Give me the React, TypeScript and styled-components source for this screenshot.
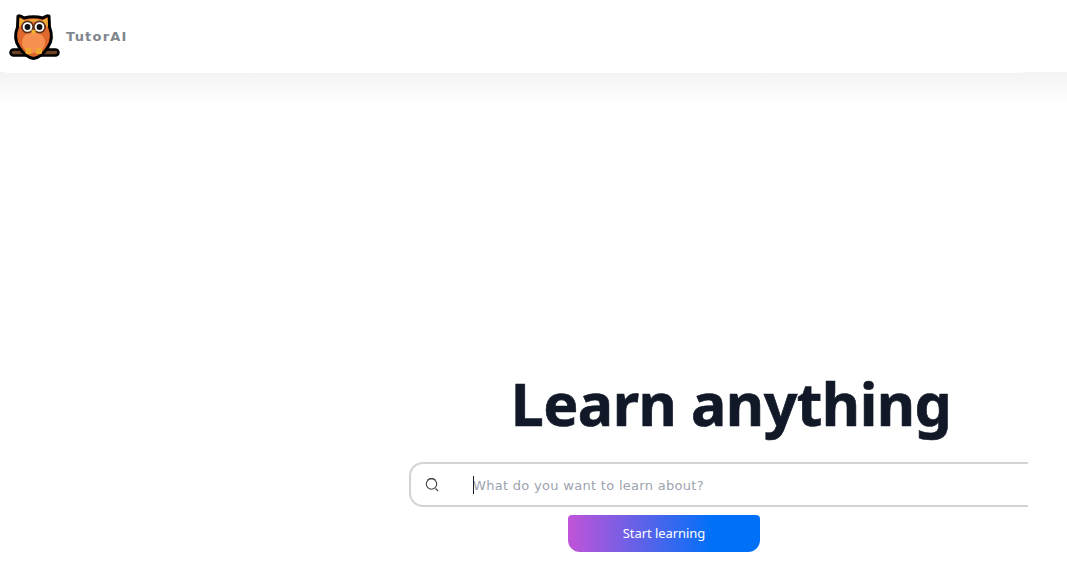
import * as React from 'react';
import styled, { createGlobalStyle } from 'styled-components';

const GlobalStyle = createGlobalStyle`
	html, body {
		margin: 0;
		padding: 0;
		background: #ffffff;
		height: 100%;
		overflow: hidden;
	}
`;

const Owl = () => (
	<svg width="52" height="48" viewBox="0 0 52 48" aria-hidden="true">
		<rect x="1.5" y="36.5" width="48" height="6" rx="3" fill="#6b4226" stroke="#000" strokeWidth="2.5" />
		<path
			d="M9 3 Q11 2 15 5 Q24.5 2.5 34 5 Q38 2 40 3 L40.5 14 Q45 25 39 34 Q33 44 24.5 45.5 Q16 44 10 34 Q4 25 8.5 14 Z"
			fill="#e0682c"
			stroke="#000"
			strokeWidth="3"
			strokeLinejoin="round"
		/>
		<path d="M10.5 5 L16 7.5 Q24.5 5 33 7.5 L38.5 5 L39 14 Q24.5 3 10 14 Z" fill="#eeaa38" />
		<ellipse cx="24.5" cy="29.5" rx="11.5" ry="10.5" fill="#f78f50" />
		<circle cx="18.5" cy="14" r="5.6" fill="#fff" stroke="#5a3018" strokeWidth="1.6" />
		<circle cx="30.5" cy="14" r="5.6" fill="#fff" stroke="#5a3018" strokeWidth="1.6" />
		<circle cx="18.5" cy="14" r="2.9" fill="#111" />
		<circle cx="30.5" cy="14" r="2.9" fill="#111" />
		<path d="M22 17 L27 17 L24.5 23 Z" fill="#f0b030" />
		<rect x="16.5" y="35" width="6" height="6" rx="1" fill="#f0a830" />
		<rect x="27" y="35" width="6" height="6" rx="1" fill="#f0a830" />
	</svg>
);

const SearchGlyph = () => (
	<svg width="16" height="16" viewBox="0 0 16 16" fill="none" stroke="#444" strokeWidth="1.1" aria-hidden="true">
		<circle cx="7.5" cy="7" r="5.2" />
		<path d="M3.5 3 L6 1.6 L9 1.6 L11.5 3" />
		<path d="M11.5 11.5 L14 14" />
	</svg>
);

const App = () => (
	<>
		<GlobalStyle />
		<Page>
			<Header>
				<Logo>
					<Owl />
					<Brand>TutorAI</Brand>
				</Logo>
			</Header>
			<Fade />
			<Main>
				<Column>
					<Title>Learn anything</Title>
					<SearchBox>
						<SearchIcon>
							<SearchGlyph />
						</SearchIcon>
						<Caret />
						<SearchInput placeholder="What do you want to learn about?" />
					</SearchBox>
					<StartButton>Start learning</StartButton>
				</Column>
			</Main>
		</Page>
	</>
);

const Page = styled.div`
	width: 1067px;
	height: 561px;
	overflow: hidden;
	background: #fff;
`;

const Header = styled.header`
	position: relative;
	z-index: 1;
	width: 1028px;
	height: 73px;
	box-sizing: border-box;
	background: #fff;
	border-radius: 0 0 8px 8px;
	display: flex;
	align-items: center;
	padding-left: 9px;
`;

const Logo = styled.div`
	display: flex;
	align-items: center;
	gap: 5px;
`;

const Brand = styled.span`
	font-family: 'DejaVu Sans', sans-serif;
	font-weight: 700;
	font-size: 13px;
	letter-spacing: 1.2px;
	color: #7f868e;
	margin-top: -1px;
`;

const Fade = styled.div`
	height: 34px;
	margin-top: -1px;
	background: linear-gradient(to bottom, #f3f3f3, #ffffff);
`;

const Main = styled.main`
	width: 1028px;
	height: 454px;
	overflow: hidden;
	padding-left: 409px;
	box-sizing: border-box;
`;

const Column = styled.div`
	width: 644px;
	padding-top: 261px;
	display: flex;
	flex-direction: column;
`;

const Title = styled.h1`
	margin: 0;
	font-family: 'Noto Sans', sans-serif;
	font-weight: 700;
	font-size: 59px;
	line-height: 72px;
	letter-spacing: -0.55px;
	text-align: center;
	color: #111827;
	-webkit-text-stroke: 0.6px #111827;
`;

const SearchBox = styled.div`
	position: relative;
	margin-top: 23px;
	height: 45px;
	box-sizing: border-box;
	border: 2px solid #d4d4d4;
	border-radius: 14px;
	display: flex;
	align-items: center;
	background: #fff;
`;

const SearchIcon = styled.span`
	display: flex;
	margin-left: 13px;
	width: 16px;
`;

const Caret = styled.span`
	position: absolute;
	left: 62px;
	top: 12px;
	width: 1px;
	height: 18px;
	background: #111827;
`;

const SearchInput = styled.input`
	margin-left: 33px;
	flex: 1;
	border: 0;
	outline: 0;
	padding: 2px 0 0;
	background: transparent;
	font-family: 'DejaVu Sans', sans-serif;
	font-size: 13px;
	letter-spacing: 0.3px;
	color: #111827;

	&::placeholder {
		color: #9ca3af;
		opacity: 1;
	}
`;

const StartButton = styled.button`
	margin: 8px 0 0 159px;
	width: 192px;
	height: 37px;
	border: 0;
	border-radius: 4px 4px 12px 12px;
	background: linear-gradient(to right, #c154d8, #0070f8 75%);
	color: #fff;
	font-family: 'Noto Sans', sans-serif;
	font-size: 13px;
	letter-spacing: -0.05px;
	padding: 0 0 2px;
`;

export default App;
